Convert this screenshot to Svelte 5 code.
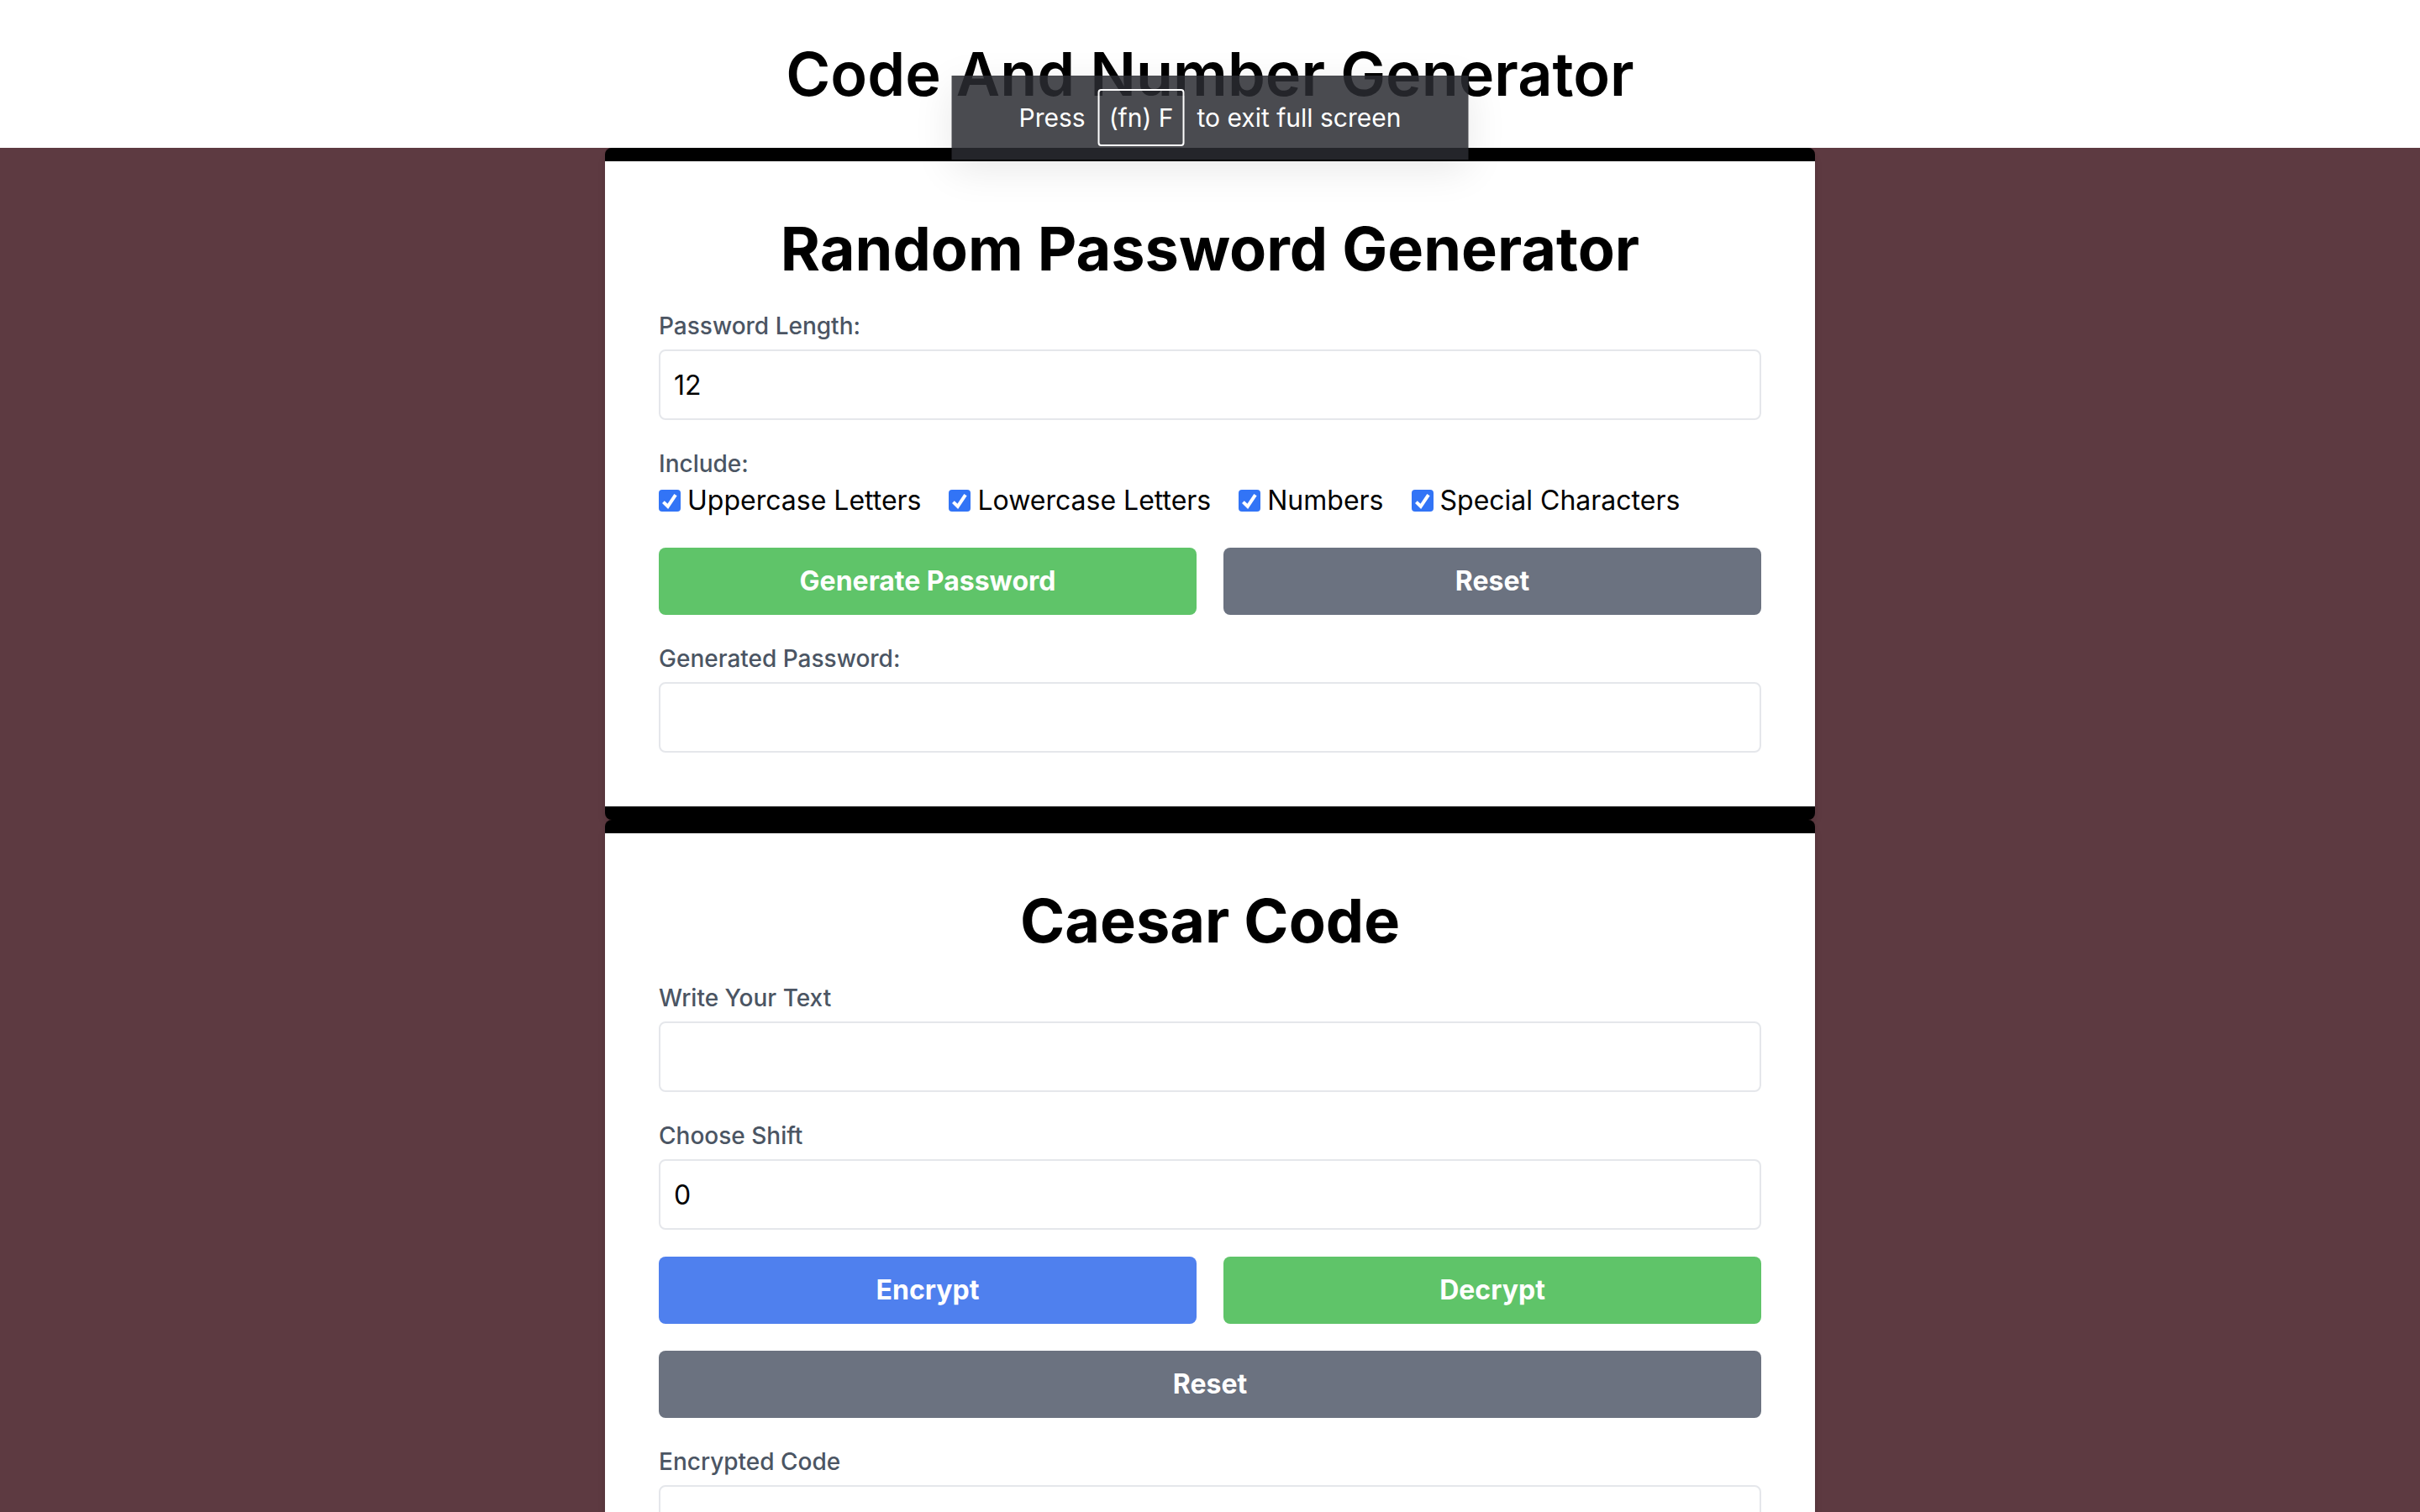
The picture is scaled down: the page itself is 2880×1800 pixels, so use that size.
<script>
  let length = $state(12);
  let shift = $state(0);
  let source = $state('');
  let password = $state('');
  let encoded = $state('');
  let sets = $state([
    { id: 'upper', label: 'Uppercase Letters', chars: 'ABCDEFGHIJKLMNOPQRSTUVWXYZ', on: true },
    { id: 'lower', label: 'Lowercase Letters', chars: 'abcdefghijklmnopqrstuvwxyz', on: true },
    { id: 'digits', label: 'Numbers', chars: '0123456789', on: true },
    { id: 'special', label: 'Special Characters', chars: '!@#$%^&*()-_=+?', on: true }
  ]);

  function generate() {
    const pool = sets.filter((s) => s.on).map((s) => s.chars).join('');
    password = pool
      ? Array.from({ length }, () => pool[Math.floor(Math.random() * pool.length)]).join('')
      : '';
  }

  function resetPassword() {
    length = 12;
    password = '';
    sets.forEach((s) => (s.on = true));
  }

  function rotate(by) {
    encoded = source.replace(/[a-z]/gi, (c) => {
      const base = c <= 'Z' ? 65 : 97;
      return String.fromCharCode(((((c.charCodeAt(0) - base + by) % 26) + 26) % 26) + base);
    });
  }

  function resetCaesar() {
    source = '';
    encoded = '';
    shift = 0;
  }
</script>

<div class="page">
  <header>
    <h1>Code And Number Generator</h1>
  </header>

  <main>
    <section class="card">
      <h2>Random Password Generator</h2>
      <div class="field">
        <label for="length">Password Length:</label>
        <input id="length" class="box" type="number" bind:value={length} />
      </div>
      <fieldset>
        <legend>Include:</legend>
        <div class="checks">
          {#each sets as set (set.id)}
            <label class="check" for={set.id}>
              <span class="tick">
                <input id={set.id} type="checkbox" bind:checked={set.on} />
                <svg viewBox="0 0 26 26" aria-hidden="true">
                  <path d="M5.4 14.6 10.8 19.8 20 6.2" />
                </svg>
              </span>
              {set.label}
            </label>
          {/each}
        </div>
      </fieldset>
      <div class="buttons">
        <button class="green" onclick={generate}>Generate Password</button>
        <button class="gray" onclick={resetPassword}>Reset</button>
      </div>
      <div class="field">
        <label for="password">Generated Password:</label>
        <input id="password" class="box" type="text" readonly value={password} />
      </div>
    </section>

    <section class="card">
      <h2>Caesar Code</h2>
      <div class="field">
        <label for="source">Write Your Text</label>
        <input id="source" class="box" type="text" bind:value={source} />
      </div>
      <div class="field">
        <label for="shift">Choose Shift</label>
        <input id="shift" class="box" type="number" bind:value={shift} />
      </div>
      <div class="buttons">
        <button class="blue" onclick={() => rotate(shift)}>Encrypt</button>
        <button class="green" onclick={() => rotate(-shift)}>Decrypt</button>
      </div>
      <div class="buttons">
        <button class="gray" onclick={resetCaesar}>Reset</button>
      </div>
      <div class="field">
        <label for="encoded">Encrypted Code</label>
        <input id="encoded" class="box" type="text" readonly value={encoded} />
      </div>
    </section>
  </main>

  <div class="toast" role="status">
    <span>Press</span>
    <kbd>(fn) F</kbd>
    <span>to exit full screen</span>
  </div>
</div>

<style>
  :global(body) {
    background: #5d3a41;
    overflow: hidden;
  }

  :global(html) {
    height: 100%;
    overflow: hidden;
  }

  .page {
    position: relative;
    height: 100vh;
    overflow: hidden;
    box-sizing: border-box;
    color: #000;
    font: 32px/48px Inter, 'Liberation Sans', sans-serif;
  }

  header {
    padding: 48px;
    background: #fff;
    text-align: center;
  }

  h1,
  h2 {
    margin: 0;
    font-size: 72px;
    line-height: 80px;
  }

  h1 {
    font-weight: 600;
  }

  h2 {
    font-weight: 700;
    text-align: center;
  }

  main {
    width: 50%;
    margin: 0 auto;
  }

  .card {
    display: flex;
    flex-direction: column;
    gap: 32px;
    padding: 64px;
    background: #fff;
    border: solid #000;
    border-width: 16px 0;
    border-radius: 8px;
    box-shadow: 0 8px 12px -2px rgb(0 0 0 / 10%), 0 4px 8px -4px rgb(0 0 0 / 10%);
  }

  .field {
    display: flex;
    flex-direction: column;
    gap: 8px;
  }

  .field label,
  legend {
    padding: 0;
    color: #4b5563;
    font-size: 28px;
    font-weight: 500;
    line-height: 40px;
  }

  .box {
    box-sizing: border-box;
    width: 100%;
    height: 84px;
    padding: 16px;
    color: #000;
    background: #fff;
    border: 2px solid #e5e7eb;
    border-radius: 8px;
    font: inherit;
    appearance: textfield;
  }

  fieldset {
    min-width: 0;
    margin: 0;
    padding: 0;
    border: 0;
  }

  .checks {
    display: flex;
    flex-wrap: wrap;
    gap: 33px;
  }

  .check {
    display: flex;
    align-items: center;
    gap: 8px;
  }

  .tick {
    display: grid;
    width: 26px;
    height: 26px;
  }

  .tick input,
  .tick svg {
    grid-area: 1 / 1;
    width: 26px;
    height: 26px;
    margin: 0;
  }

  .tick input {
    appearance: none;
    border: 2px solid #767676;
    border-radius: 4px;
    background: #fff;
  }

  .tick input:checked {
    border: 0;
    background: #3274f6;
  }

  .tick svg {
    visibility: hidden;
    fill: none;
    stroke: #fff;
    stroke-width: 4;
    pointer-events: none;
  }

  .tick input:checked + svg {
    visibility: visible;
  }

  .buttons {
    display: flex;
    gap: 32px;
  }

  button {
    flex: 1;
    padding: 16px 32px;
    color: #fff;
    border: 0;
    border-radius: 8px;
    font: inherit;
    font-weight: 700;
    cursor: pointer;
  }

  .green {
    background: #5fc469;
  }

  .gray {
    background: #6b7280;
  }

  .blue {
    background: #4f80ee;
  }

  .toast {
    position: absolute;
    top: 90px;
    left: 50%;
    transform: translateX(-50%);
    display: flex;
    align-items: center;
    gap: 15px;
    padding: 16px 80px;
    color: #fff;
    background: rgb(42 43 49 / 85%);
    box-shadow: 0 12px 48px rgb(0 0 0 / 9%);
    font-size: 30px;
    white-space: nowrap;
  }

  kbd {
    padding: 8px 11px;
    border: 2px solid #fff;
    border-radius: 4px;
    font: inherit;
  }
</style>
